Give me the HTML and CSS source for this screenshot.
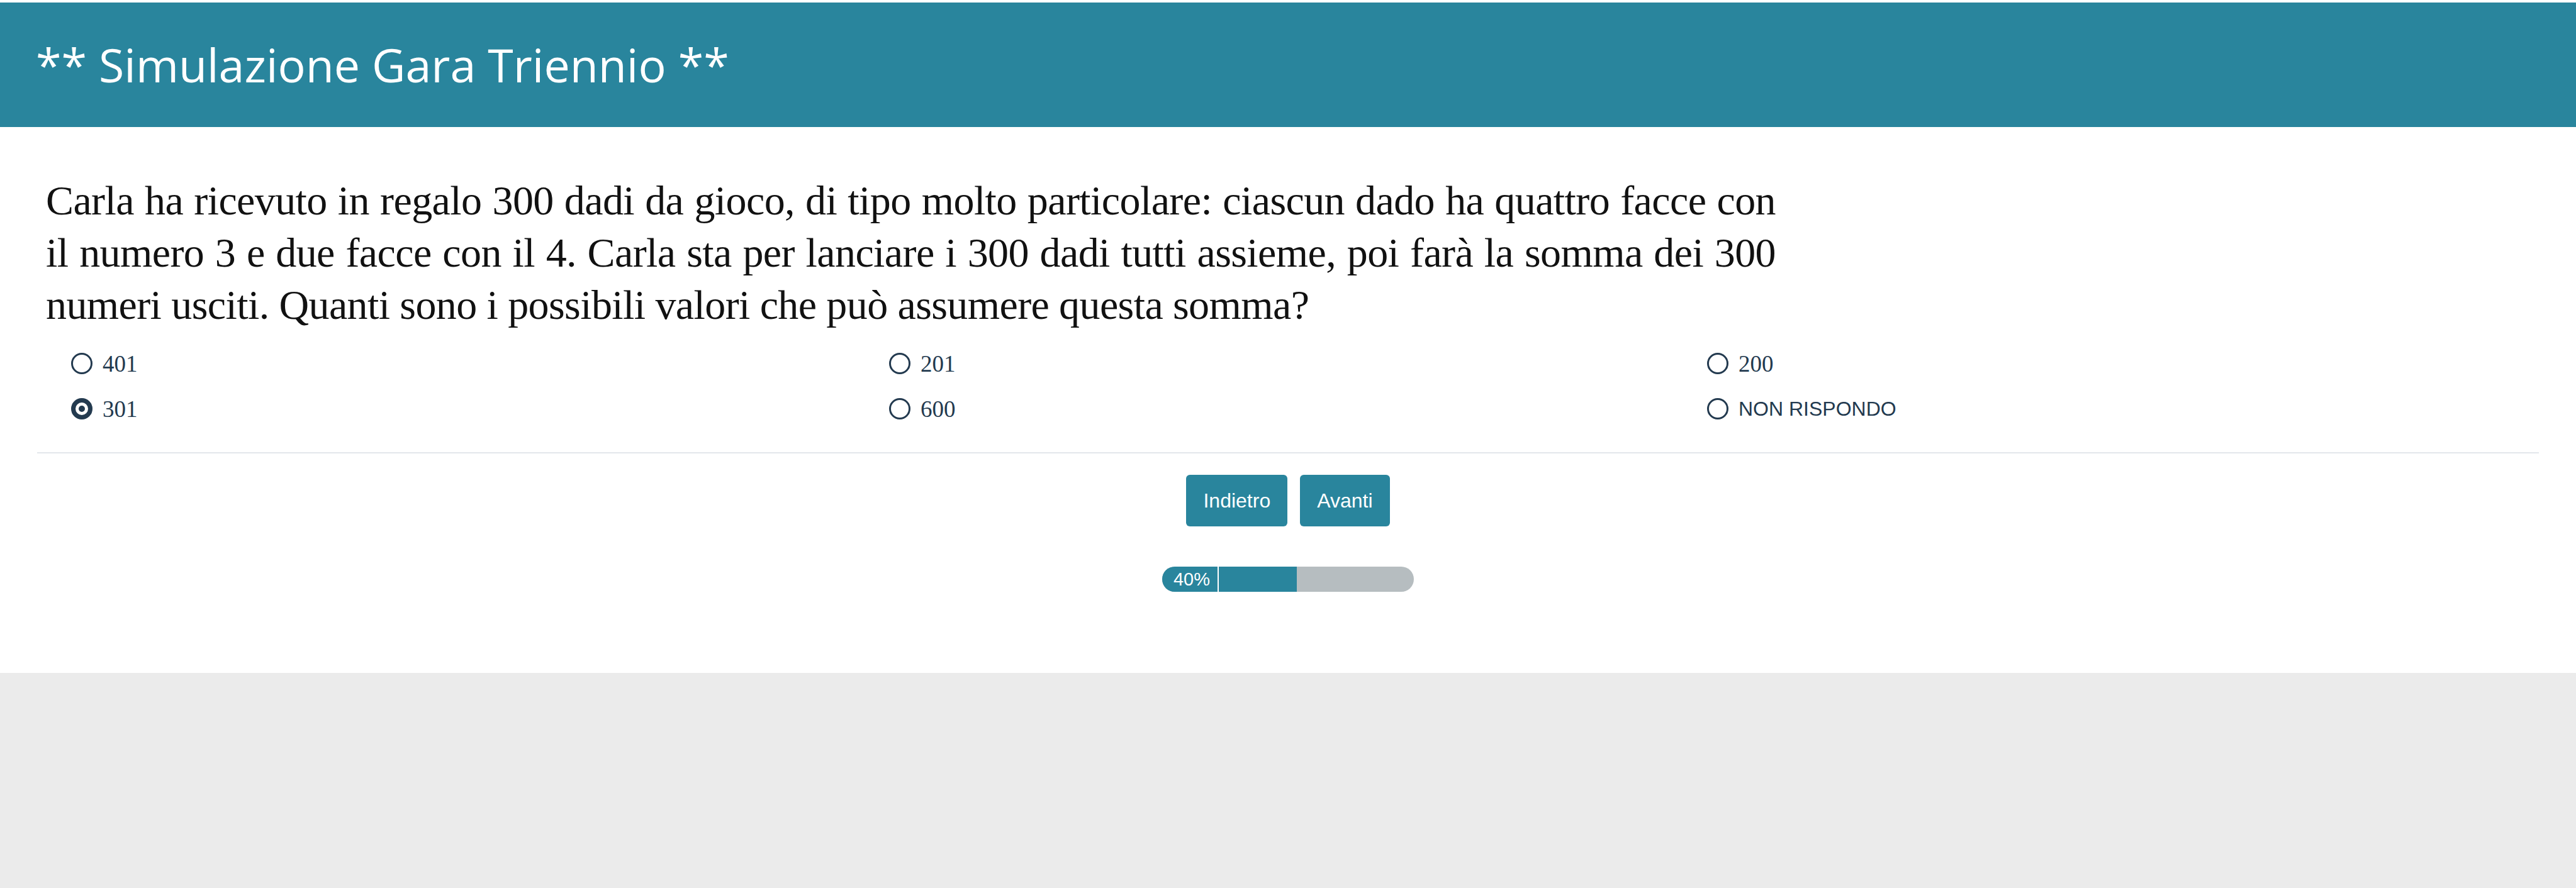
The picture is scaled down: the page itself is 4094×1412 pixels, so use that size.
FILE: index.html
```html
<!DOCTYPE html>
<html lang="it">
<head>
<meta charset="utf-8">
<title>Simulazione Gara Triennio</title>
<link rel="stylesheet" href="styles.css">
</head>
<body>
<div class="page">
  <header class="topbar">
    <h1 class="title">** Simulazione Gara Triennio **</h1>
  </header>
  <main class="content">
    <p class="question">Carla ha ricevuto in regalo 300 dadi da gioco, di tipo molto particolare: ciascun dado ha quattro facce con il numero 3 e due facce con il 4. Carla sta per lanciare i 300 dadi tutti assieme, poi farà la somma dei 300 numeri usciti. Quanti sono i possibili valori che può assumere questa somma?</p>
    <form class="options">
      <label class="option"><input type="radio" name="ans" class="radio"><span class="opt-text">401</span></label>
      <label class="option"><input type="radio" name="ans" class="radio"><span class="opt-text">201</span></label>
      <label class="option"><input type="radio" name="ans" class="radio"><span class="opt-text">200</span></label>
      <label class="option"><input type="radio" name="ans" class="radio" checked><span class="opt-text">301</span></label>
      <label class="option"><input type="radio" name="ans" class="radio"><span class="opt-text">600</span></label>
      <label class="option"><input type="radio" name="ans" class="radio"><span class="opt-text sans">NON RISPONDO</span></label>
    </form>
    <hr class="divider">
    <div class="nav">
      <button class="btn" type="button">Indietro</button>
      <button class="btn" type="button">Avanti</button>
    </div>
    <div class="progress-wrap">
      <div class="progress">
        <span class="progress-label">40%</span>
        <span class="progress-fill"></span>
      </div>
    </div>
  </main>
</div>
</body>
</html>
```
FILE: styles.css
```css
html, body {
  margin: 0;
  padding: 0;
}
body {
  background: #ebebeb;
  font-family: "Liberation Sans", Arial, sans-serif;
}
.page {
  background: #ffffff;
  padding-top: 4px;
  padding-bottom: 129px;
}
.topbar {
  background: #29859d;
  height: 198px;
  display: flex;
  align-items: center;
  padding-left: 57px;
}
.title {
  margin: 0;
  color: #ffffff;
  font-family: "Open Sans", "Noto Sans", sans-serif;
  font-weight: 400;
  font-size: 73.5px;
  line-height: 1;
}
.content {
  padding: 0 59px;
}
.question {
  margin: 75px 0 0 14px;
  width: 2749px;
  font-family: "Liberation Serif", "Times New Roman", serif;
  font-size: 66px;
  letter-spacing: -0.6px;
  line-height: 83px;
  color: #111111;
  text-align: justify;
}
.options {
  display: grid;
  grid-template-columns: repeat(3, 1300px);
  row-gap: 36px;
  padding-left: 54px;
  margin-top: 34px;
}
.option {
  display: flex;
  align-items: center;
  gap: 16px;
  height: 36px;
}
.radio {
  appearance: none;
  -webkit-appearance: none;
  margin: 0;
  width: 34px;
  height: 34px;
  border: 3px solid #233a4f;
  border-radius: 50%;
  box-sizing: border-box;
  display: grid;
  place-items: center;
  background: #fff;
}
.radio:checked {
  border-width: 7px;
}
.radio:checked::before {
  content: "";
  width: 10px;
  height: 10px;
  border-radius: 50%;
  background: #233a4f;
}
.opt-text {
  font-family: "Liberation Serif", "Times New Roman", serif;
  font-size: 37px;
  color: #233a4f;
}
.opt-text.sans {
  font-family: "Liberation Sans", Arial, sans-serif;
  font-size: 32px;
}
.divider {
  border: 0;
  height: 2px;
  background: #e3e7eb;
  margin: 51px 0 0;
}
.nav {
  display: flex;
  justify-content: center;
  gap: 20px;
  margin-top: 34px;
}
.btn {
  height: 82px;
  padding: 0 27px;
  border: 0;
  border-radius: 6px;
  background: #29859d;
  color: #ffffff;
  font-family: "Liberation Sans", Arial, sans-serif;
  font-size: 32px;
}
.progress-wrap {
  display: flex;
  justify-content: center;
  margin-top: 64px;
}
.progress {
  width: 400px;
  height: 40px;
  border-radius: 20px;
  background: #b6bdc0;
  overflow: hidden;
  display: flex;
}
.progress-label {
  width: 90px;
  background: #29859d;
  color: #ffffff;
  font-size: 29px;
  line-height: 40px;
  text-align: center;
  padding-left: 6px;
  box-sizing: border-box;
  border-right: 2px solid #ffffff;
}
.progress-fill {
  width: 124px;
  background: #29859d;
}
```
